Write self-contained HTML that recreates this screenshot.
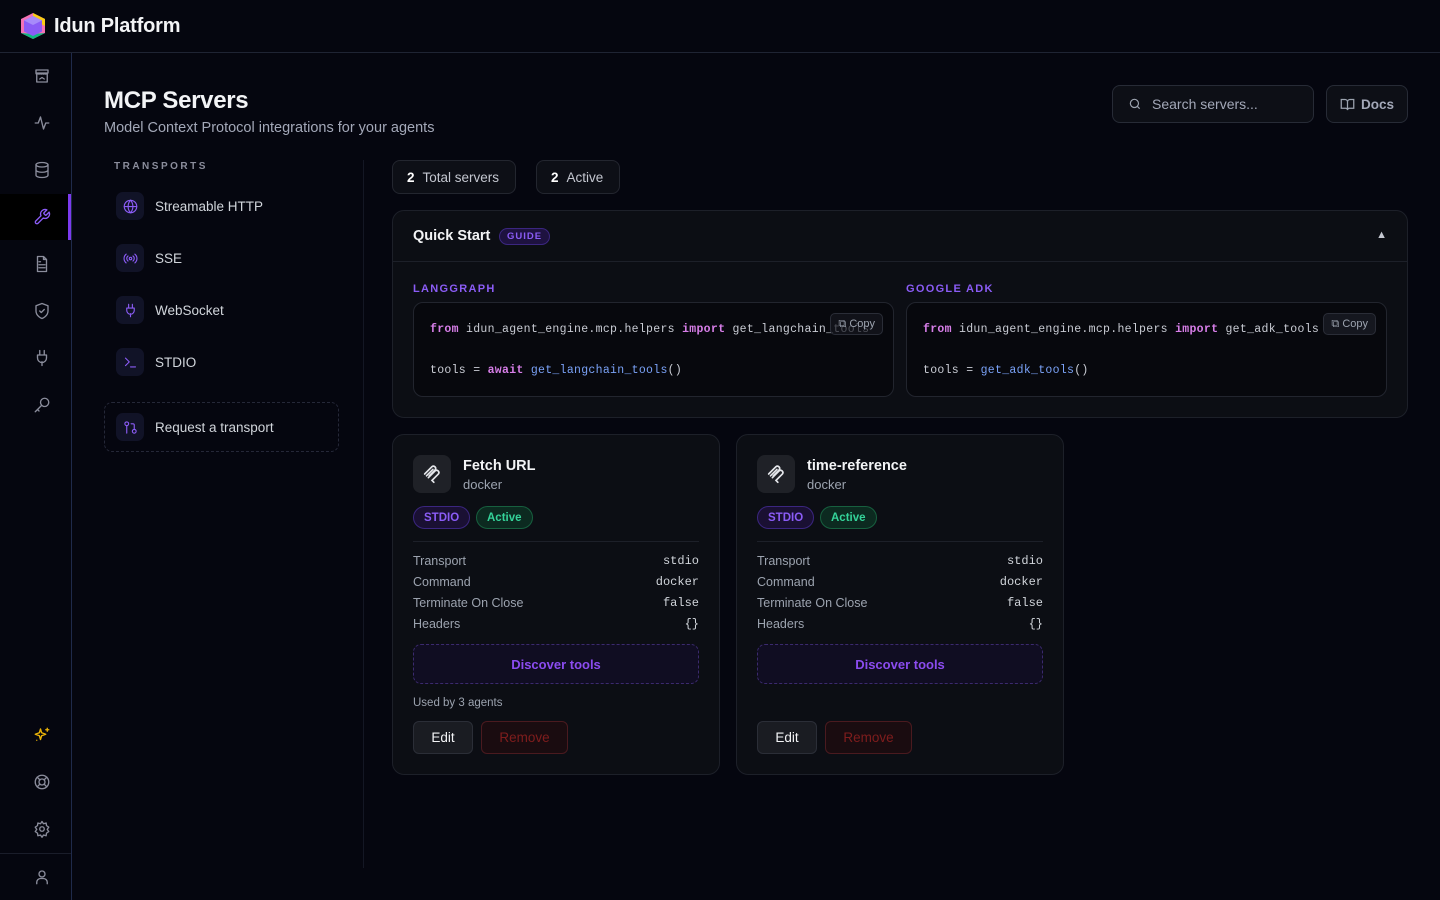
<!DOCTYPE html>
<html><head><meta charset="utf-8"><style>
*{box-sizing:border-box;margin:0;padding:0}
body{width:1440px;height:900px;background:#05060f;font-family:"Liberation Sans",sans-serif;color:#e5e7eb;position:relative;overflow:hidden}
.hdr{position:absolute;left:0;top:0;width:1440px;height:53px;border-bottom:1px solid #1f2433;background:#05060f}
.logo{position:absolute;left:20px;top:12px}
.brand{position:absolute;left:54px;top:15px;font-size:20px;font-weight:bold;color:#f3f4f6;letter-spacing:-0.2px}
.side{position:absolute;left:0;top:53px;width:72px;height:847px;border-right:1px solid #1f2a4a;background:#05060f}
.si{position:absolute;left:0;width:71px;height:46px;display:flex;align-items:center;justify-content:center;padding-left:13px}
.si svg{width:18px;height:18px;fill:none;stroke:#8b8d9c;stroke-width:1.8;stroke-linecap:round;stroke-linejoin:round}
.si.act{background:#000}
.si.act:after{content:"";position:absolute;right:0;top:0;width:3px;height:46px;background:#7c3aed}
.si.act svg{stroke:#8b5cf6}
.abs{position:absolute}
h1{position:absolute;left:104px;top:87px;font-size:24px;font-weight:bold;color:#f3f4f6;letter-spacing:-0.3px}
.sub{position:absolute;left:104px;top:120px;font-size:14.5px;color:#a3a8b8}
.tlab{position:absolute;left:114px;top:161px;font-size:10px;letter-spacing:2.5px;color:#8b8d9c;font-weight:bold}
.tr{position:absolute;left:116px;height:32px;display:flex;align-items:center;font-size:13.5px;color:#d1d5db}
.tr .ic{width:28px;height:28px;border-radius:7px;background:#111327;display:flex;align-items:center;justify-content:center;margin-right:11px}
.tr svg{width:15px;height:15px;fill:none;stroke:#8b5cf6;stroke-width:1.8;stroke-linecap:round;stroke-linejoin:round}
.req{position:absolute;left:104px;top:402px;width:235px;height:50px;border:1px dashed #252838;border-radius:8px}
.vline{position:absolute;left:363px;top:160px;width:1px;height:708px;background:#141724}
.pill{position:absolute;top:160px;height:34px;border:1px solid #23262f;border-radius:8px;background:#0d0f16;font-size:13.5px;color:#c4c7d0;display:flex;align-items:center;padding:0 14px}
.pill b{color:#fff;margin-right:8px}
.card{position:absolute;background:#0c0e14;border:1px solid #1d2029;border-radius:12px}
.code{position:absolute;border:1px solid #22252e;border-radius:10px;background:#07080d;font-family:"Liberation Mono",monospace;font-size:11.5px;letter-spacing:0.3px;color:#c9ccd4}
.code .l{position:absolute;left:16px;white-space:pre}
.kw{color:#d77ee8;font-weight:bold}.fn{color:#7aa2f7}
.copy{position:absolute;top:10px;height:22px;border:1px solid #2a2d37;border-radius:5px;background:rgba(21,23,31,.7);font-family:"Liberation Sans",sans-serif;letter-spacing:0;font-size:11px;color:#9ca3af;display:flex;align-items:center;padding:0 7px}
.seclab{position:absolute;top:283px;font-size:11px;font-weight:bold;letter-spacing:1.3px;color:#8b5cf6}
.row{position:absolute;left:20px;right:20px;display:flex;justify-content:space-between;font-size:12.5px;color:#9ca3af}
.row span:last-child{font-family:"Liberation Mono",monospace;color:#d1d5db;font-size:12px}
.tag{position:absolute;top:71px;height:23px;border-radius:12px;font-size:11.5px;font-weight:bold;display:flex;align-items:center;padding:0 10px}
.disc{position:absolute;left:20px;right:20px;top:209px;height:40px;border:1px dashed #3b2a6e;border-radius:8px;background:#100d22;color:#8b4cf0;font-weight:bold;font-size:13px;display:flex;align-items:center;justify-content:center}
.btn{position:absolute;top:286px;height:33px;border-radius:6px;font-size:13.5px;display:flex;align-items:center;justify-content:center}
</style></head><body>
<div class="hdr">
<svg class="logo" width="26" height="28" viewBox="0 0 26 28"><polygon points="13,1 25,7 25,21 13,27 1,21 1,7" fill="#f472b6"/><polygon points="13,1 25,7 25,14 13,8" fill="#facc15"/><polygon points="1,21 13,27 25,21 13,22" fill="#10b981"/><polygon points="13,4 22,8.5 22,19.5 13,24 4,19.5 4,8.5" fill="#8b5cf6"/><polygon points="13,4 22,8.5 13,13 4,8.5" fill="#a78bfa"/></svg>
<div class="brand">Idun Platform</div>
</div>
<div class="side">
<div class="si" style="top:0"><svg viewBox="0 0 24 24"><path d="M4 4h16v4H4zM5 8v12h14V8M4 8c0 2 2.5 2 2.5 0 0 2 3 2 3 0 0 2 3 2 3 0 0 2 3 2 3 0 0 2 2.5 2 2.5 0M9 16l3-2 3 2"/></svg></div>
<div class="si" style="top:47px"><svg viewBox="0 0 24 24"><path d="M3 12h4l3-8 4 16 3-8h4"/></svg></div>
<div class="si" style="top:94px"><svg viewBox="0 0 24 24"><ellipse cx="12" cy="5" rx="8" ry="3"/><path d="M4 5v14c0 1.7 3.6 3 8 3s8-1.3 8-3V5M4 12c0 1.7 3.6 3 8 3s8-1.3 8-3"/></svg></div>
<div class="si act" style="top:141px"><svg viewBox="0 0 24 24"><path d="M14.7 6.3a1 1 0 000 1.4l1.6 1.6a1 1 0 001.4 0l3.8-3.8a6 6 0 01-7.9 7.9l-6.9 6.9a2.1 2.1 0 01-3-3l6.9-6.9a6 6 0 017.9-7.9z"/></svg></div>
<div class="si" style="top:188px"><svg viewBox="0 0 24 24"><path d="M14 2H6v20h12V6zM14 2v4h4M8 13h8M8 17h8M8 9h2"/></svg></div>
<div class="si" style="top:235px"><svg viewBox="0 0 24 24"><path d="M12 22s8-3 8-10V5l-8-3-8 3v7c0 7 8 10 8 10zM9 12l2 2 4-4"/></svg></div>
<div class="si" style="top:282px"><svg viewBox="0 0 24 24"><path d="M12 22v-5M9 8V2M15 8V2M6 8h12v4a6 6 0 01-12 0z"/></svg></div>
<div class="si" style="top:329px"><svg viewBox="0 0 24 24"><circle cx="15.5" cy="8.5" r="5.5"/><path d="M11.5 12.5L3 21M6 18l2 2"/></svg></div>
<div class="si" style="top:659px"><svg viewBox="0 0 24 24" style="stroke:#eab308"><path d="M10 4l1.5 5L17 11l-5.5 2L10 18l-1.5-5L3 11l5.5-2zM19 3v4M17 5h4M5 19h.01"/></svg></div>
<div class="si" style="top:706px"><svg viewBox="0 0 24 24"><circle cx="12" cy="12" r="9"/><circle cx="12" cy="12" r="4"/><path d="M5.6 5.6l3.6 3.6M14.8 14.8l3.6 3.6M14.8 9.2l3.6-3.6M5.6 18.4l3.6-3.6"/></svg></div>
<div class="si" style="top:753px"><svg viewBox="0 0 24 24"><circle cx="12" cy="12" r="3"/><path d="M12 2l2 3 3.5-1 .5 3.5 3 2-2 3 2 3-3 2-.5 3.5-3.5-1-2 3-2-3-3.5 1L6 17.5l-3-2 2-3-2-3 3-2L6.5 4 10 5z"/></svg></div>
<div style="position:absolute;left:0;top:800px;width:71px;height:1px;background:#1a1d2a"></div>
<div class="si" style="top:801px"><svg viewBox="0 0 24 24"><circle cx="12" cy="8" r="4"/><path d="M5 21v-2a5 5 0 015-5h4a5 5 0 015 5v2"/></svg></div>
</div>

<h1>MCP Servers</h1>
<div class="sub">Model Context Protocol integrations for your agents</div>
<div class="abs" style="left:1112px;top:85px;width:202px;height:38px;border:1px solid #272b36;border-radius:8px;background:#0d0f16;display:flex;align-items:center;font-size:14px;color:#a3a8b8"><svg width="14" height="14" viewBox="0 0 24 24" style="margin:0 10px 0 15px" fill="none" stroke="#9ca3af" stroke-width="2"><circle cx="11" cy="11" r="7"/><path d="M20 20l-4-4"/></svg>Search servers...</div>
<div class="abs" style="left:1326px;top:85px;width:82px;height:38px;border:1px solid #272b36;border-radius:8px;background:#0d0f16;display:flex;align-items:center;justify-content:center;font-size:13.5px;color:#a3a8b8;font-weight:bold"><svg width="15" height="15" viewBox="0 0 24 24" style="margin-right:6px" fill="none" stroke="#9ca3af" stroke-width="2"><path d="M2 4h6a4 4 0 014 4v13a3 3 0 00-3-3H2zM22 4h-6a4 4 0 00-4 4v13a3 3 0 013-3h7z"/></svg>Docs</div>

<div class="tlab">TRANSPORTS</div>
<div class="tr" style="top:190px"><div class="ic"><svg viewBox="0 0 24 24"><circle cx="12" cy="12" r="10"/><path d="M2 12h20M12 2a15 15 0 010 20M12 2a15 15 0 000 20"/></svg></div>Streamable HTTP</div>
<div class="tr" style="top:242px"><div class="ic"><svg viewBox="0 0 24 24"><circle cx="12" cy="12" r="2"/><path d="M8 8a5 5 0 000 8M16 8a5 5 0 010 8M5 5a9 9 0 000 14M19 5a9 9 0 010 14"/></svg></div>SSE</div>
<div class="tr" style="top:294px"><div class="ic"><svg viewBox="0 0 24 24"><path d="M12 22v-5M9 8V2M15 8V2M6 8h12v4a6 6 0 01-12 0z"/></svg></div>WebSocket</div>
<div class="tr" style="top:346px"><div class="ic"><svg viewBox="0 0 24 24"><path d="M4 17l6-6-6-6M12 19h8"/></svg></div>STDIO</div>
<div class="req"></div>
<div class="tr" style="top:411px"><div class="ic"><svg viewBox="0 0 24 24"><circle cx="6" cy="6" r="3"/><circle cx="18" cy="18" r="3"/><path d="M6 9v12M13 6h3a2 2 0 012 2v7"/></svg></div>Request a transport</div>
<div class="vline"></div>

<div class="pill" style="left:392px;width:124px"><b>2</b>Total servers</div>
<div class="pill" style="left:536px;width:84px"><b>2</b>Active</div>

<div class="card" style="left:392px;top:210px;width:1016px;height:208px">
<div style="position:absolute;left:20px;top:17px;font-size:14.5px;font-weight:bold;color:#f3f4f6">Quick Start</div>
<div style="position:absolute;left:106px;top:17px;height:17px;padding:0 7px;border-radius:9px;background:#1e1240;border:1px solid #3b2680;font-size:9.5px;font-weight:bold;letter-spacing:1px;color:#8b5cf6;line-height:15px">GUIDE</div>
<div style="position:absolute;right:20px;top:18px;font-size:11px;color:#c4c7d0">▲</div>
<div style="position:absolute;left:0;right:0;top:50px;height:1px;background:#1d2029"></div>
</div>
<div class="seclab" style="left:413px">LANGGRAPH</div>
<div class="seclab" style="left:906px">GOOGLE ADK</div>
<div class="code" style="left:413px;top:302px;width:481px;height:95px">
<div class="l" style="top:20px"><span class="kw">from</span> idun_agent_engine.mcp.helpers <span class="kw">import</span> get_langchain_tools</div>
<div class="l" style="top:61px">tools = <span class="kw">await</span> <span class="fn">get_langchain_tools</span>()</div>
<div class="copy" style="right:10px">⧉ Copy</div>
</div>
<div class="code" style="left:906px;top:302px;width:481px;height:95px;overflow:hidden">
<div class="l" style="top:20px"><span class="kw">from</span> idun_agent_engine.mcp.helpers <span class="kw">import</span> get_adk_tools</div>
<div class="l" style="top:61px">tools = <span class="fn">get_adk_tools</span>()</div>
<div class="copy" style="right:10px;background:#15171f">⧉ Copy</div>
</div>

<div class="card" style="left:392px;top:434px;width:328px;height:341px">
<div style="position:absolute;left:20px;top:20px;width:38px;height:38px;border-radius:8px;background:#1f2127;display:flex;align-items:center;justify-content:center"><svg width="22" height="22" viewBox="0 0 24 24" fill="none" stroke="#e5e7eb" stroke-width="1.8" stroke-linecap="round"><path d="M4 12l8-8a2.5 2.5 0 013.5 3.5L9 14M8 16l7.5-7.5a2.5 2.5 0 013.5 3.5L12 19l2 2M6 14l7-7"/></svg></div>
<div style="position:absolute;left:70px;top:23px;font-size:14.5px;font-weight:bold;color:#f3f4f6">Fetch URL</div>
<div style="position:absolute;left:70px;top:42px;font-size:13px;color:#9ca3af">docker</div>
<div class="tag" style="left:20px;background:#1a1033;border:1px solid #3b2680;color:#8b5cf6">STDIO</div>
<div class="tag" style="left:83px;background:#0c2a20;border:1px solid #17603f;color:#34d399">Active</div>
<div style="position:absolute;left:20px;right:20px;top:106px;height:1px;background:#1d2029"></div>
<div class="row" style="top:119px"><span>Transport</span><span>stdio</span></div>
<div class="row" style="top:140px"><span>Command</span><span>docker</span></div>
<div class="row" style="top:161px"><span>Terminate On Close</span><span>false</span></div>
<div class="row" style="top:182px"><span>Headers</span><span>{}</span></div>
<div class="disc">Discover tools</div>
<div style="position:absolute;left:20px;top:262px;font-size:11.5px;color:#9ca3af">Used by 3 agents</div>
<div class="btn" style="left:20px;width:60px;background:#1a1c22;border:1px solid #2b2e37;color:#f3f4f6">Edit</div>
<div class="btn" style="left:88px;width:87px;background:#1a0c10;border:1px solid #4a1a1f;color:#7f1d1d">Remove</div>
</div>

<div class="card" style="left:736px;top:434px;width:328px;height:341px">
<div style="position:absolute;left:20px;top:20px;width:38px;height:38px;border-radius:8px;background:#1f2127;display:flex;align-items:center;justify-content:center"><svg width="22" height="22" viewBox="0 0 24 24" fill="none" stroke="#e5e7eb" stroke-width="1.8" stroke-linecap="round"><path d="M4 12l8-8a2.5 2.5 0 013.5 3.5L9 14M8 16l7.5-7.5a2.5 2.5 0 013.5 3.5L12 19l2 2M6 14l7-7"/></svg></div>
<div style="position:absolute;left:70px;top:23px;font-size:14.5px;font-weight:bold;color:#f3f4f6">time-reference</div>
<div style="position:absolute;left:70px;top:42px;font-size:13px;color:#9ca3af">docker</div>
<div class="tag" style="left:20px;background:#1a1033;border:1px solid #3b2680;color:#8b5cf6">STDIO</div>
<div class="tag" style="left:83px;background:#0c2a20;border:1px solid #17603f;color:#34d399">Active</div>
<div style="position:absolute;left:20px;right:20px;top:106px;height:1px;background:#1d2029"></div>
<div class="row" style="top:119px"><span>Transport</span><span>stdio</span></div>
<div class="row" style="top:140px"><span>Command</span><span>docker</span></div>
<div class="row" style="top:161px"><span>Terminate On Close</span><span>false</span></div>
<div class="row" style="top:182px"><span>Headers</span><span>{}</span></div>
<div class="disc">Discover tools</div>
<div class="btn" style="left:20px;width:60px;background:#1a1c22;border:1px solid #2b2e37;color:#f3f4f6">Edit</div>
<div class="btn" style="left:88px;width:87px;background:#1a0c10;border:1px solid #4a1a1f;color:#7f1d1d">Remove</div>
</div>
</body></html>
